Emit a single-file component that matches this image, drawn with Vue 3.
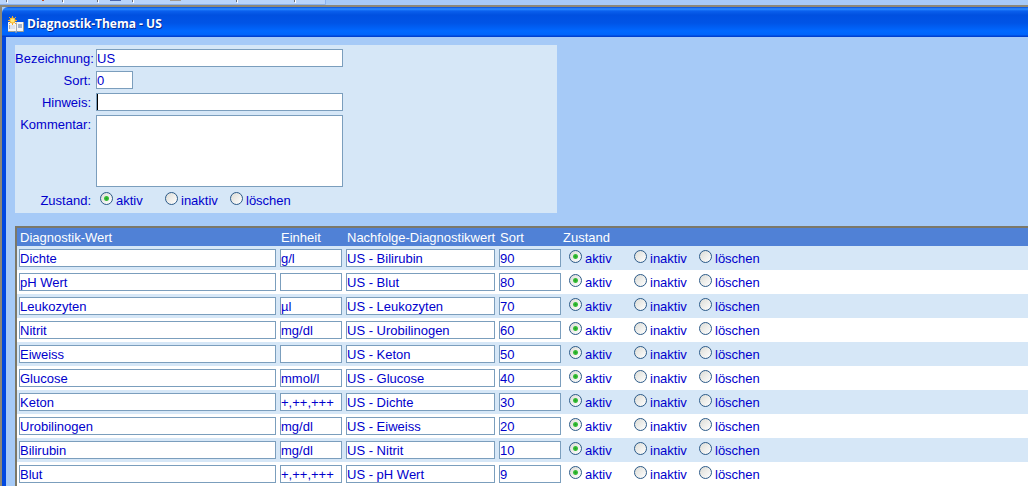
<script setup>
import { reactive } from 'vue'

const states = ['aktiv', 'inaktiv', 'löschen']

const topic = reactive({ name: 'US', sort: '0', hint: '', comment: '', state: 'aktiv' })

const rows = reactive([
  { name: 'Dichte', unit: 'g/l', next: 'US - Bilirubin', sort: '90', state: 'aktiv' },
  { name: 'pH Wert', unit: '', next: 'US - Blut', sort: '80', state: 'aktiv' },
  { name: 'Leukozyten', unit: 'µl', next: 'US - Leukozyten', sort: '70', state: 'aktiv' },
  { name: 'Nitrit', unit: 'mg/dl', next: 'US - Urobilinogen', sort: '60', state: 'aktiv' },
  { name: 'Eiweiss', unit: '', next: 'US - Keton', sort: '50', state: 'aktiv' },
  { name: 'Glucose', unit: 'mmol/l', next: 'US - Glucose', sort: '40', state: 'aktiv' },
  { name: 'Keton', unit: '+,++,+++', next: 'US - Dichte', sort: '30', state: 'aktiv' },
  { name: 'Urobilinogen', unit: 'mg/dl', next: 'US - Eiweiss', sort: '20', state: 'aktiv' },
  { name: 'Bilirubin', unit: 'mg/dl', next: 'US - Nitrit', sort: '10', state: 'aktiv' },
  { name: 'Blut', unit: '+,++,+++', next: 'US - pH Wert', sort: '9', state: 'aktiv' },
])
</script>

<template>
  <div class="desktop">
    <div class="toolbar">
      <svg width="328" height="5" viewBox="0 0 328 5" aria-hidden="true">
        <path d="M0 0h326v4H0z" fill="#b8d4fa" />
        <path d="M0 4.5H325.500V0" fill="none" stroke="#8ab2ee" />
        <path d="M7.500 0V3M63.500 0V3M98.500 0V3M133.500 0V3M237.500 0V3M295.500 0V3" stroke="#fff" />
        <path d="M6.500 0V2M62.500 0V2M97.500 0V2M132.500 0V2M236.500 0V2M294.500 0V2" stroke="#68707c" />
        <path d="M42 0h2v1h-2z" fill="#c04a20" />
        <path d="M110 0h11v1h-11z" fill="#4a66b0" />
        <path d="M170 0h11v1h-11z" fill="#a09a90" />
      </svg>
    </div>
    <section class="window">
      <header class="titlebar">
        <svg class="icon" width="16" height="17" viewBox="0 0 16 17" aria-hidden="true">
          <path d="M0 6h16v9H9l-1 1-1-1H0z" fill="#f4f4f2" />
          <path d="M0 15.500h6.500l1.500 1 1.500-1H15.500V6" fill="none" stroke="#a09c90" />
          <path d="M8.500 6.500V15M1.500 9v4" stroke="#a8acb4" />
          <path d="M2 9h5v4H2z" fill="#dce2ec" />
          <path d="M10 8h4v4h-4z" fill="#a4b4cc" />
          <path d="M4.500 0v9M0 4.500h9M1 1l7 7M8 1L1 8" stroke="#f2a428" stroke-width="1" />
          <circle cx="4.500" cy="4.500" r="3" fill="#f8b830" />
          <circle cx="4.500" cy="4.500" r="2" fill="#ffe878" />
        </svg>
        <h1>Diagnostik-Thema - US</h1>
      </header>
      <main class="content">
        <form class="panel" @submit.prevent>
          <div class="field">
            <label for="name">Bezeichnung:</label>
            <input id="name" v-model="topic.name" class="box wide" type="text">
          </div>
          <div class="field">
            <label for="sort">Sort:</label>
            <input id="sort" v-model="topic.sort" class="box tiny" type="text">
          </div>
          <div class="field">
            <label for="hint">Hinweis:</label>
            <input id="hint" v-model="topic.hint" class="box wide current" type="text">
          </div>
          <div class="field">
            <label for="comment">Kommentar:</label>
            <textarea id="comment" v-model="topic.comment" class="box wide area"></textarea>
          </div>
          <div class="field" role="radiogroup" aria-labelledby="state-label">
            <span id="state-label" class="caption">Zustand:</span>
            <div class="options">
              <label v-for="s in states" :key="s" class="option">
                <input v-model="topic.state" type="radio" name="topic-state" :value="s">{{ s }}
              </label>
            </div>
          </div>
        </form>
        <table class="values">
          <colgroup>
            <col class="c-name"><col class="c-unit"><col class="c-next"><col class="c-sort"><col>
          </colgroup>
          <thead>
            <tr>
              <th>Diagnostik-Wert</th>
              <th>Einheit</th>
              <th>Nachfolge-Diagnostikwert</th>
              <th>Sort</th>
              <th class="last">Zustand</th>
            </tr>
          </thead>
          <tbody>
            <tr v-for="(r, i) in rows" :key="i">
              <td><input v-model="r.name" class="box" type="text" aria-label="Diagnostik-Wert"></td>
              <td><input v-model="r.unit" class="box" type="text" aria-label="Einheit"></td>
              <td><input v-model="r.next" class="box" type="text" aria-label="Nachfolge-Diagnostikwert"></td>
              <td><input v-model="r.sort" class="box" type="text" aria-label="Sort"></td>
              <td>
                <div class="options" role="radiogroup" aria-label="Zustand">
                  <label v-for="s in states" :key="s" class="option">
                    <input v-model="r.state" type="radio" :name="'state-' + i" :value="s">{{ s }}
                  </label>
                </div>
              </td>
            </tr>
          </tbody>
        </table>
      </main>
    </section>
  </div>
</template>

<style>
body {
  overflow: hidden;
}
</style>

<style scoped>
.desktop {
  min-height: 100vh;
  background: #a6caf7;
  color: #0000cc;
  font: 13px/18px "Liberation Sans", Arial, sans-serif;
}
.toolbar {
  height: 5px;
}
.toolbar svg {
  display: block;
}
.window {
  border-top: 2px solid #8c8878;
  border-left: 2px solid #8c8878;
}
.titlebar {
  display: flex;
  align-items: center;
  gap: 3px;
  box-sizing: border-box;
  height: 30px;
  padding: 4px 0 0 6px;
  border-top-left-radius: 6px;
  background: linear-gradient(#0a50d8 0, #2b8cff 2px, #0a60ee 4px, #0050e0 8px, #0054e6 16px, #0068ff 24px, #0064fa 28px, #0040d0 29px, #0040d0 30px);
}
.icon {
  flex: none;
}
h1 {
  margin: 0;
  color: #fff;
  font: bold 12px/18px "Open Sans", "Noto Sans", sans-serif;
  text-shadow: 1px 1px 0 #0a2a90;
  white-space: nowrap;
}
.content {
  padding: 8px 0 0 9px;
  border-left: 4px solid #0048e0;
}
.panel {
  display: flex;
  flex-direction: column;
  gap: 4px;
  width: 542px;
  max-width: 100%;
  box-sizing: border-box;
  padding: 4px 0;
  background: #d6e7f7;
}
.field {
  display: flex;
  align-items: flex-start;
}
.field > label,
.caption {
  flex: none;
  width: 81px;
  height: 18px;
  padding-right: 5px;
  box-sizing: border-box;
  line-height: 20px;
  text-align: right;
  white-space: nowrap;
}
.box {
  display: block;
  box-sizing: border-box;
  width: 100%;
  height: 18px;
  margin: 0;
  padding: 0;
  border: 1px solid #7b9ebd;
  border-radius: 0;
  outline: 0;
  background: #fff;
  color: inherit;
  font: inherit;
  line-height: 16px;
}
.wide {
  width: 247px;
}
.tiny {
  width: 37px;
}
.current {
  box-shadow: inset 1px 0 0 #000;
}
.area {
  height: 72px;
  resize: none;
}
.options {
  display: flex;
  height: 18px;
  padding-left: 4px;
  line-height: 20px;
}
.option {
  display: flex;
  flex: none;
  gap: 3px;
  width: 65px;
  white-space: nowrap;
}
.option input {
  appearance: none;
  flex: none;
  box-sizing: border-box;
  width: 13px;
  height: 13px;
  margin: 1px 0 0;
  border: 1px solid #2c5a88;
  border-radius: 50%;
  background: linear-gradient(135deg, #dcdcd6, #fff);
}
.option input:checked {
  background: radial-gradient(circle, #21a121 0, #3cc03c 2px, transparent 3px), linear-gradient(135deg, #dcdcd6, #fff);
}
.values {
  width: 100%;
  margin-top: 13px;
  table-layout: fixed;
  border-collapse: separate;
  border-spacing: 0;
  border-top: 2px solid #7c7868;
  border-left: 2px solid #7c7868;
}
.c-name {
  width: 261px;
}
.c-unit {
  width: 66px;
}
.c-next {
  width: 153px;
}
.c-sort {
  width: 66px;
}
th {
  height: 18px;
  box-sizing: border-box;
  padding: 2px 0 0 3px;
  background: #5081d6;
  color: #fff;
  font-weight: normal;
  line-height: 16px;
  text-align: left;
  white-space: nowrap;
}
th.last {
  padding-left: 0;
}
td {
  padding: 3px 2px;
  background: #fff;
}
tbody tr:nth-child(odd) td {
  background: #d6e7f7;
}
</style>
